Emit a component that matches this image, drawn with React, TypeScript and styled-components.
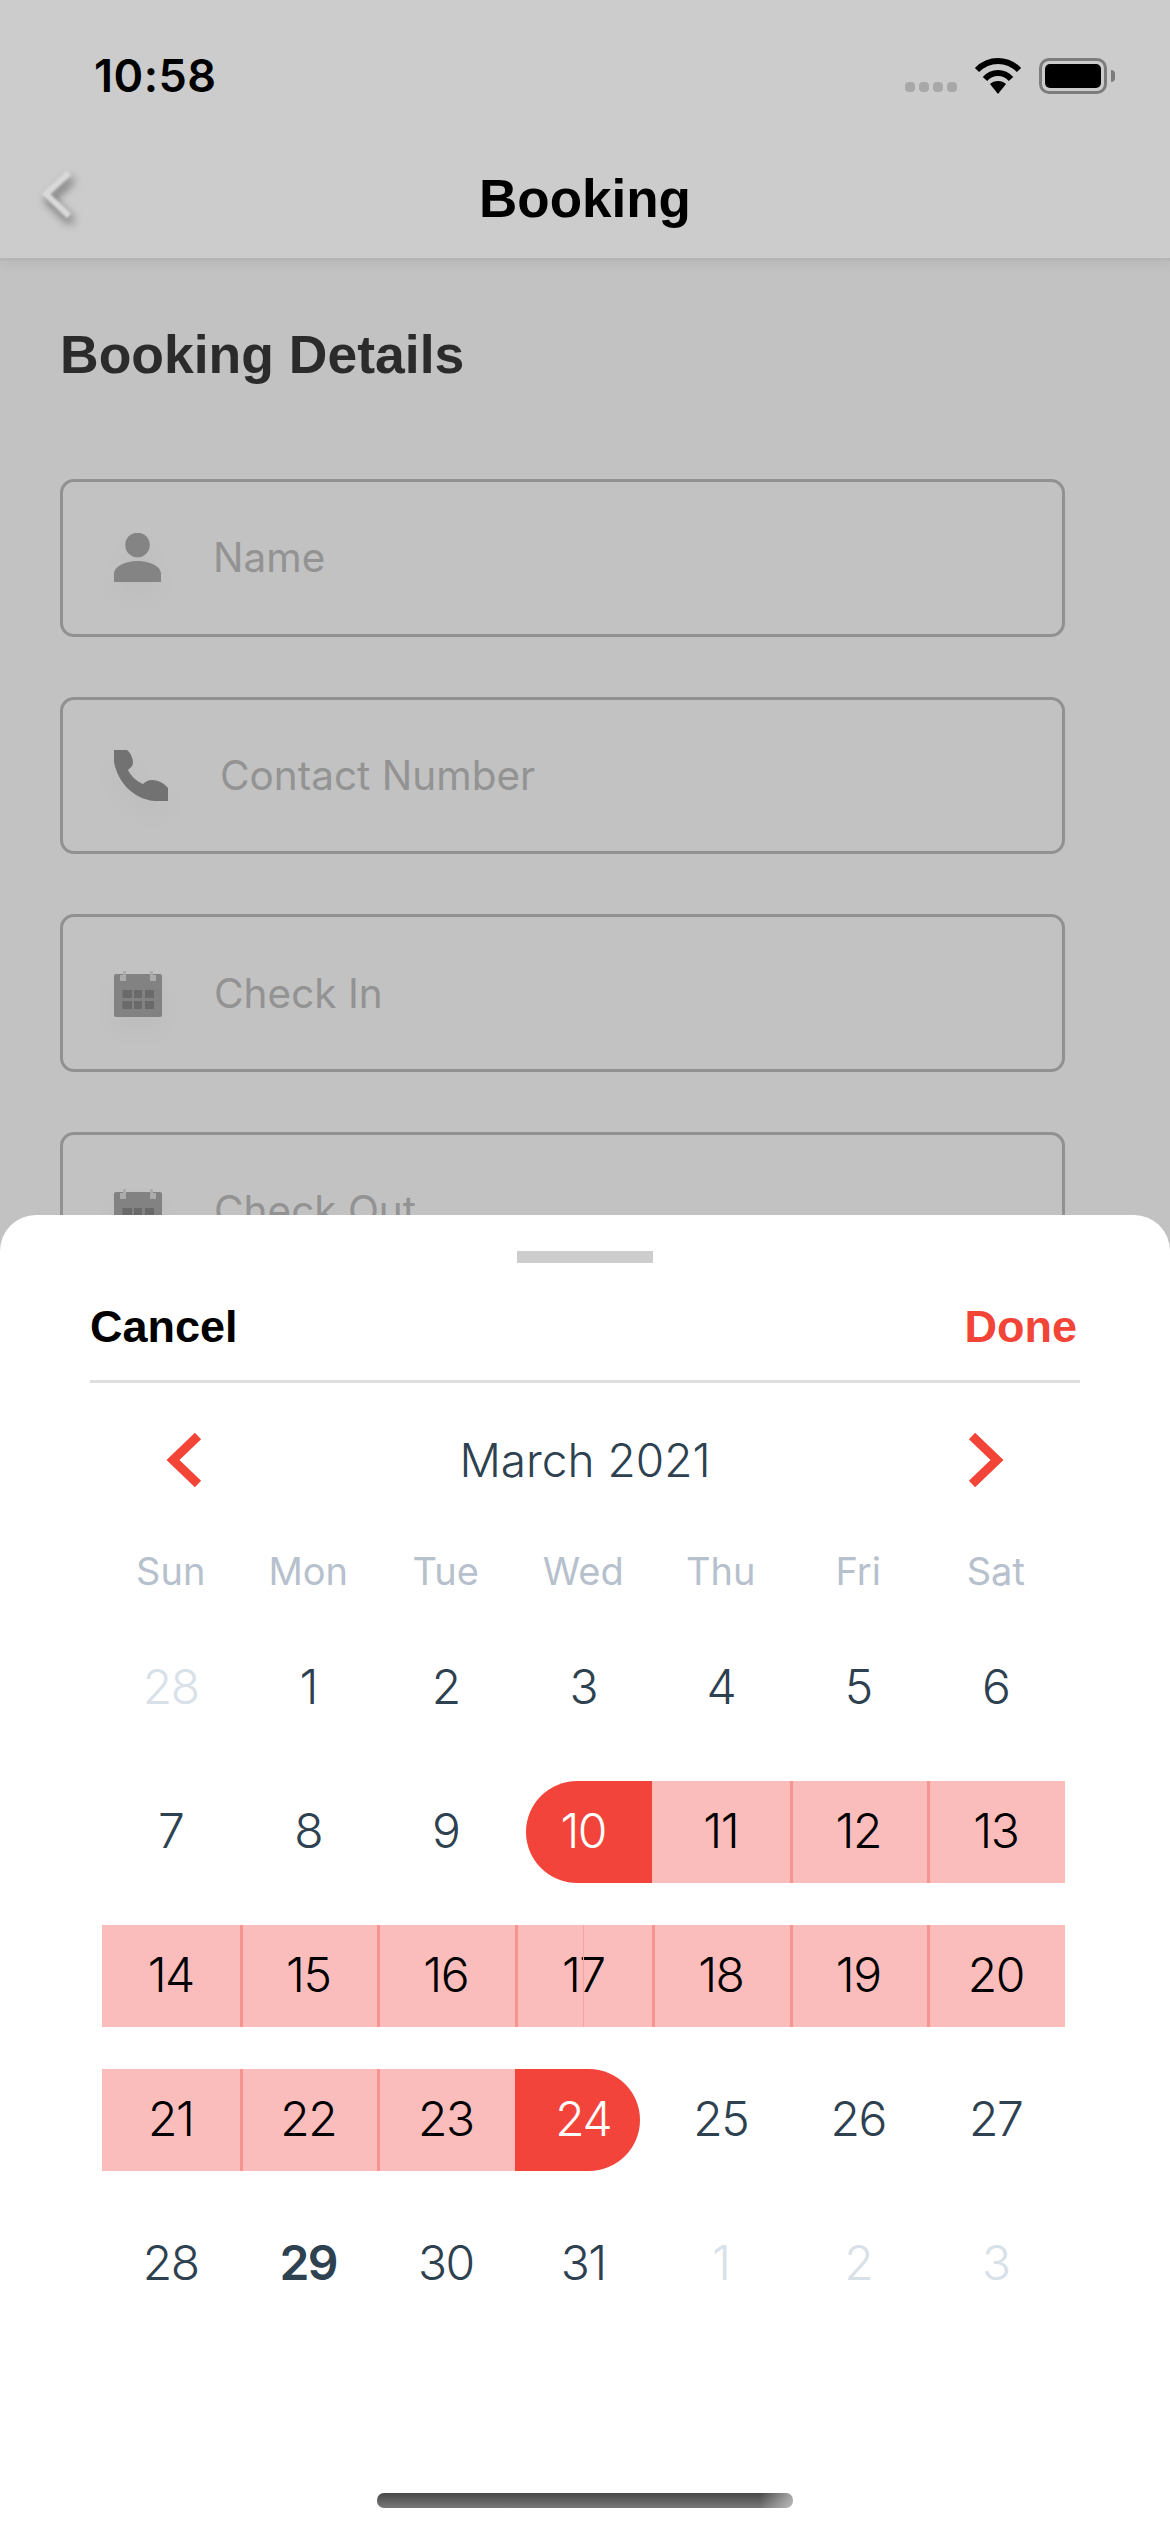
import React from "react";
import styled, { createGlobalStyle } from "styled-components";

const Global = createGlobalStyle`
  html, body { margin: 0; padding: 0; }
  body { font-family: "Inter", "Liberation Sans", sans-serif; background: #c2c2c2; }
`;

const Page = styled.div`
  position: relative;
  width: 1170px;
  height: 2532px;
  overflow: hidden;
  background: #c2c2c2;
`;

const Header = styled.header`
  height: 258px;
  background: #cccccc;
  border-bottom: 3px solid #b6b6b6;
  box-shadow: 0 4px 12px rgba(0, 0, 0, 0.05);
  display: flex;
  flex-direction: column;
`;

const StatusBar = styled.div`
  height: 150px;
  display: flex;
  align-items: center;
  justify-content: space-between;
  padding: 0 63px 0 94px;
`;

const Time = styled.span`
  font-size: 45px;
  font-weight: 600;
  letter-spacing: 0.5px;
  color: #000;
`;

const StatusIcons = styled.div`
  display: flex;
  align-items: flex-end;
`;

const SignalDots = styled.div`
  display: flex;
  gap: 4px;
  margin: 0 17px 2px 0;
`;

const SignalDot = styled.i`
  display: block;
  width: 10px;
  height: 10px;
  border-radius: 4px;
  background: #a8a8a8;
`;

const Battery = styled.div`
  position: relative;
  box-sizing: border-box;
  width: 68px;
  height: 36px;
  margin-left: 17px;
  padding: 3px;
  border: 3px solid #7c7c7c;
  border-radius: 10px;
  &::after {
    content: "";
    position: absolute;
    right: -11px;
    top: 9px;
    width: 4px;
    height: 12px;
    border-radius: 0 6px 6px 0;
    background: #7c7c7c;
  }
`;

const BatteryFill = styled.div`
  height: 100%;
  border-radius: 5px;
  background: #000;
`;

const Nav = styled.div`
  flex: 1;
  display: grid;
  grid-template-columns: 1fr auto 1fr;
  align-items: center;
  padding: 0 0 10px;
`;

const BackIcon = styled.svg`
  width: 60px;
  height: 70px;
  margin-left: 28px;
  filter: drop-shadow(3px 6px 5px rgba(0, 0, 0, 0.55)) blur(0.8px);
`;

const NavTitle = styled.h1`
  margin: 0;
  font-family: "Liberation Sans", sans-serif;
  font-size: 53px;
  line-height: 64px;
  font-weight: 700;
  color: #000;
`;

const Body = styled.main`
  padding: 0 105px 0 60px;
`;

const SectionTitle = styled.h2`
  margin: 0;
  padding-top: 59px;
  height: 156px;
  box-sizing: border-box;
  font-family: "Liberation Sans", sans-serif;
  font-size: 53.5px;
  line-height: 70px;
  font-weight: 700;
  color: #2b2b2b;
`;

const Fields = styled.div`
  display: flex;
  flex-direction: column;
  gap: 60px;
  margin-top: 62px;
`;

const Field = styled.div`
  box-sizing: border-box;
  height: 157.67px;
  display: flex;
  align-items: center;
  gap: 52px;
  padding-left: 51px;
  border: 3px solid #919191;
  border-radius: 14px;
`;

const FieldIcon = styled.svg`
  display: block;
  flex: none;
  filter: drop-shadow(0 12px 12px rgba(0, 0, 0, 0.025));
`;

const Placeholder = styled.span`
  font-size: 40.5px;
  color: #939393;
`;

const Sheet = styled.section`
  position: absolute;
  left: 0;
  right: 0;
  top: 1215px;
  bottom: 0;
  display: flex;
  flex-direction: column;
  background: #fff;
  border-radius: 36px 36px 0 0;
`;

const Handle = styled.div`
  width: 136px;
  height: 12px;
  margin: 36px auto 0;
  background: #cdcdcd;
`;

const Actions = styled.div`
  display: flex;
  justify-content: space-between;
  margin: 0 90px;
  padding: 40px 3px 29px 0;
  border-bottom: 3px solid #dedede;
`;

const ActionText = styled.span<{ $accent?: boolean }>`
  font-family: "Liberation Sans", sans-serif;
  font-size: 45px;
  line-height: 48px;
  font-weight: 700;
  color: ${(p) => (p.$accent ? "#f24437" : "#000")};
`;

const MonthRow = styled.div`
  height: 154px;
  display: flex;
  align-items: center;
  justify-content: space-between;
  padding: 0 165px;
`;

const MonthTitle = styled.span`
  font-size: 46px;
  font-weight: 300;
  color: #2d4150;
`;

const Arrow = styled.svg`
  display: block;
  width: 37px;
  height: 54px;
`;

const WeekGrid = styled.div`
  display: grid;
  grid-template-columns: repeat(7, 137.5px);
  padding-left: 102px;
  height: 68px;
  align-items: center;
`;

const WeekDay = styled.span`
  text-align: center;
  font-size: 38px;
  color: #b6c1cd;
`;

const DaysGrid = styled.div`
  display: grid;
  grid-template-columns: repeat(7, 137.5px);
  grid-auto-rows: 102px;
  row-gap: 42px;
  padding-left: 102px;
  margin-top: 32px;
`;

type Kind = "plain" | "muted" | "today" | "start" | "end" | "mid" | "midSep" | "midSplit";

const Day = styled.div<{ $kind: Kind }>`
  position: relative;
  box-sizing: border-box;
  display: flex;
  align-items: center;
  justify-content: center;
  padding-bottom: 4px;
  font-size: 48px;
  letter-spacing: -1.5px;
  font-weight: ${(p) => (p.$kind === "today" ? 600 : 300)};
  color: ${(p) => {
    if (p.$kind === "muted") return "#d9e1e8";
    if (p.$kind === "plain" || p.$kind === "today") return "#2d4150";
    if (p.$kind === "start" || p.$kind === "end") return "#fff";
    return "#000";
  }};
  background: ${(p) => {
    if (p.$kind === "start" || p.$kind === "end") return "#f2443a";
    if (p.$kind.startsWith("mid")) return "#fbbdbc";
    return "transparent";
  }};
  ${(p) => p.$kind === "start" && "margin-left: 11.5px; padding-right: 11.5px; border-radius: 51px 0 0 51px;"}
  ${(p) => p.$kind === "end" && "margin-right: 12px; padding-left: 12px; border-radius: 0 51px 51px 0;"}
  ${(p) => (p.$kind === "midSep" || p.$kind === "midSplit") && "box-shadow: inset 3px 0 0 #f69492;"}
  ${(p) =>
    p.$kind === "midSplit" &&
    `&::after { content: ""; position: absolute; top: 0; bottom: 0; left: 50%; width: 1px; background: #f7a5a4; }`}
`;

const HomeBar = styled.div`
  width: 416px;
  height: 15px;
  margin: auto auto 24px;
  border-radius: 7px;
  background: linear-gradient(to right, transparent 92%, rgba(255, 255, 255, 0.5)),
    linear-gradient(#484848, #787878);
`;

const weekDays = ["Sun", "Mon", "Tue", "Wed", "Thu", "Fri", "Sat"];

const days: [string, Kind][] = [
  ["28", "muted"], ["1", "plain"], ["2", "plain"], ["3", "plain"], ["4", "plain"], ["5", "plain"], ["6", "plain"],
  ["7", "plain"], ["8", "plain"], ["9", "plain"], ["10", "start"], ["11", "mid"], ["12", "midSep"], ["13", "midSep"],
  ["14", "mid"], ["15", "midSep"], ["16", "midSep"], ["17", "midSplit"], ["18", "midSep"], ["19", "midSep"], ["20", "midSep"],
  ["21", "mid"], ["22", "midSep"], ["23", "midSep"], ["24", "end"], ["25", "plain"], ["26", "plain"], ["27", "plain"],
  ["28", "plain"], ["29", "today"], ["30", "plain"], ["31", "plain"], ["1", "muted"], ["2", "muted"], ["3", "muted"],
];

const PersonIcon = () => (
  <FieldIcon width="47" height="49" viewBox="0 0 47 49">
    <circle cx="23.5" cy="12" r="12.3" fill="#848484" />
    <path d="M0 49V41C0 33 12 28 23.5 28S47 33 47 41V49Z" fill="#848484" />
  </FieldIcon>
);

const PhoneIcon = () => (
  <FieldIcon width="54" height="51" viewBox="0 0 54 51">
    <path
      d="M0 0H13C17 3 19 9 19 13C19 16 16 18 14 20C17 26 22 31 29 34C31 32 34 30 38 30C44 30 50 33 54 38V51H40C20 49 4 33 0 12Z"
      fill="#727272"
    />
  </FieldIcon>
);

const CalendarIcon = () => (
  <FieldIcon width="48" height="48" viewBox="0 0 48 48">
    <path d="M2 5H46A2 2 0 0 1 48 7V46A2 2 0 0 1 46 48H2A2 2 0 0 1 0 46V7A2 2 0 0 1 2 5Z" fill="#828282" />
    <path d="M6 12H12V2H9V6H6ZM36 12H42V6H39V2H36Z" fill="#ababab" />
    <path
      d="M8.5 21H18V29H8.5ZM20 21H28V29H20ZM31 21H40V29H31ZM8.5 32H18V40H8.5ZM20 32H28V40H20ZM31 32H40V40H31Z"
      fill="#6a6a6a"
    />
  </FieldIcon>
);

export default function App() {
  return (
    <Page>
      <Global />
      <Header>
        <StatusBar>
          <Time>10:58</Time>
          <StatusIcons>
            <SignalDots>
              <SignalDot />
              <SignalDot />
              <SignalDot />
              <SignalDot />
            </SignalDots>
            <svg width="48" height="37" viewBox="0 0 48 37">
              <path d="M3 13C15 1 33 1 45 13" fill="none" stroke="#000" strokeWidth="6" />
              <path d="M11 22C18 14 30 14 37 22" fill="none" stroke="#000" strokeWidth="6" />
              <path d="M16 27C20 23 28 23 32 27L24 37Z" fill="#000" />
            </svg>
            <Battery>
              <BatteryFill />
            </Battery>
          </StatusIcons>
        </StatusBar>
        <Nav>
          <BackIcon viewBox="0 0 60 70">
            <path d="M41 9L18 30L41 52" fill="none" stroke="#d9d9d9" strokeWidth="6" />
          </BackIcon>
          <NavTitle>Booking</NavTitle>
        </Nav>
      </Header>
      <Body>
        <SectionTitle>Booking Details</SectionTitle>
        <Fields>
          <Field>
            <PersonIcon />
            <Placeholder>Name</Placeholder>
          </Field>
          <Field>
            <PhoneIcon />
            <Placeholder>Contact Number</Placeholder>
          </Field>
          <Field>
            <CalendarIcon />
            <Placeholder>Check In</Placeholder>
          </Field>
          <Field>
            <CalendarIcon />
            <Placeholder>Check Out</Placeholder>
          </Field>
        </Fields>
      </Body>
      <Sheet>
        <Handle />
        <Actions>
          <ActionText>Cancel</ActionText>
          <ActionText $accent>Done</ActionText>
        </Actions>
        <MonthRow>
          <Arrow viewBox="0 0 37 54">
            <path d="M33 3L8 27L33 51" fill="none" stroke="#f24437" strokeWidth="9" />
          </Arrow>
          <MonthTitle>March 2021</MonthTitle>
          <Arrow viewBox="0 0 37 54">
            <path d="M4 3L29 27L4 51" fill="none" stroke="#f24437" strokeWidth="9" />
          </Arrow>
        </MonthRow>
        <WeekGrid>
          {weekDays.map((d) => (
            <WeekDay key={d}>{d}</WeekDay>
          ))}
        </WeekGrid>
        <DaysGrid>
          {days.map(([label, kind], i) => (
            <Day key={i} $kind={kind}>
              {label}
            </Day>
          ))}
        </DaysGrid>
        <HomeBar />
      </Sheet>
    </Page>
  );
}
